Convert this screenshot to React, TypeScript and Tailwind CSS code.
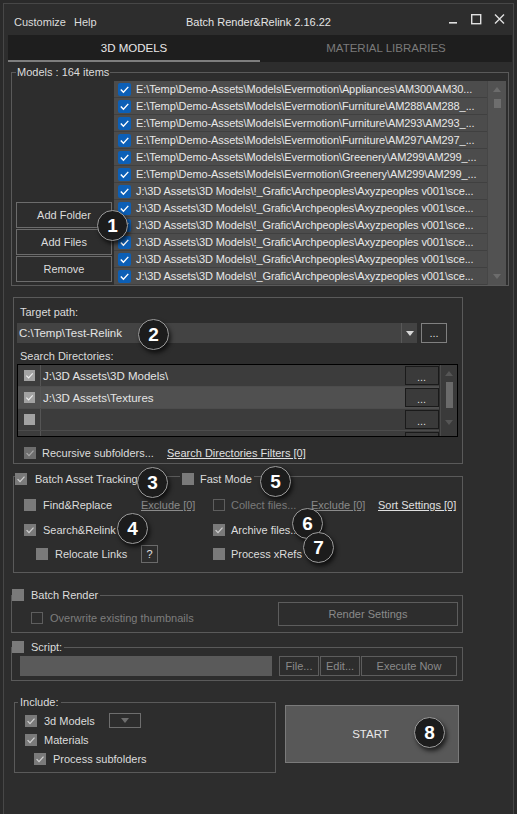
import React from 'react'

type BoxKind = 'gray' | 'outline' | 'light' | 'dim' | 'blue'

const BOX_CLS: Record<BoxKind, string> = {
  gray: 'w-[12px] h-[12px] bg-[#7a7a7a]',
  dim: 'w-[12px] h-[12px] bg-[#6e6e6e]',
  outline: 'w-[12px] h-[12px] border border-[#5e5e5e]',
  light: 'w-[11px] h-[11px] bg-[#a2a2a2]',
  blue: 'w-[13px] h-[13px] rounded-[2px] bg-[#0c5fb6]',
}

const CHECK_COLOR: Record<BoxKind, string> = {
  gray: '#cfcfcf',
  dim: '#a8a8a8',
  outline: '#777',
  light: '#eeeeee',
  blue: '#ffffff',
}

function Box({ kind, checked }: { kind: BoxKind; checked?: boolean }) {
  return (
    <span className={`flex-none block ${BOX_CLS[kind]}`}>
      {checked && (
        <svg viewBox="0 0 12 12" className="w-full h-full block">
          <path d="M2.6 6.1 L5 8.6 L9.5 3.6" fill="none" stroke={CHECK_COLOR[kind]} strokeWidth="1.3" />
        </svg>
      )}
    </span>
  )
}

function Badge({ n, className }: { n: number; className: string }) {
  return (
    <div
      className={`absolute w-[31px] h-[31px] rounded-full bg-[#1c1c1c] border-[1.5px] border-[#9c9c9c] shadow-[2px_3px_4px_rgba(0,0,0,0.65)] flex items-center justify-center text-white font-bold text-[19px] leading-none ${className}`}
    >
      {n}
    </div>
  )
}

function Tri({ color, className = '' }: { color: string; className?: string }) {
  return (
    <svg viewBox="0 0 8 5" className={`w-[8px] h-[5px] block ${className}`}>
      <path d="M0 0 H8 L4 5 Z" fill={color} />
    </svg>
  )
}

const MODELS = [
  'E:\\Temp\\Demo-Assets\\Models\\Evermotion\\Appliances\\AM300\\AM30...',
  'E:\\Temp\\Demo-Assets\\Models\\Evermotion\\Furniture\\AM288\\AM288_...',
  'E:\\Temp\\Demo-Assets\\Models\\Evermotion\\Furniture\\AM293\\AM293_...',
  'E:\\Temp\\Demo-Assets\\Models\\Evermotion\\Furniture\\AM297\\AM297_...',
  'E:\\Temp\\Demo-Assets\\Models\\Evermotion\\Greenery\\AM299\\AM299_...',
  'E:\\Temp\\Demo-Assets\\Models\\Evermotion\\Greenery\\AM299\\AM299_...',
  ...Array(6).fill('J:\\3D Assets\\3D Models\\!_Grafic\\Archpeoples\\Axyzpeoples v001\\sce...'),
]

const DIRS = [
  { path: 'J:\\3D Assets\\3D Models\\', checked: true, bg: 'bg-[#3c3c3c]', partial: false },
  { path: 'J:\\3D Assets\\Textures', checked: true, bg: 'bg-[#505050]', partial: false },
  { path: '', checked: false, bg: 'bg-[#3c3c3c]', partial: false },
  { path: '', checked: false, bg: 'bg-[#3c3c3c]', partial: true },
]

export default function App() {
  return (
    <div className="relative w-[517px] h-[814px] overflow-hidden bg-[#2a2a2a] font-['Liberation_Sans',Arial,sans-serif] text-[11px] leading-[14px] text-[#dcdcdc]">
      <div className="ml-[3px] mt-[3px] w-[511px] h-[811px] border-l border-t border-r border-[#474747] bg-[#2d2d2d] flex flex-col">
        {/* title bar */}
        <div className="h-[31px] grid grid-cols-[1fr_auto_1fr] items-start pt-[11px]">
          <div className="pl-[10px] flex gap-[8px]">
            <span>Customize</span>
            <span>Help</span>
          </div>
          <div className="text-[#e4e4e4]">Batch Render&amp;Relink 2.16.22</div>
          <div className="flex justify-end pr-[7px] -mt-[2px]">
            <svg viewBox="0 0 58 12" className="w-[58px] h-[12px] block">
              <rect x="1" y="9" width="8" height="1.6" fill="#e0e0e0" />
              <rect x="23.7" y="1.7" width="9" height="9" fill="none" stroke="#e0e0e0" strokeWidth="1.4" />
              <path d="M47 1.5 L56 10.5 M56 1.5 L47 10.5" stroke="#e0e0e0" strokeWidth="1.4" />
            </svg>
          </div>
        </div>

        {/* tabs */}
        <div className="ml-[4px] w-[504px] h-[27px] bg-[#1e1e1e] flex text-[11.5px]">
          <div className="flex-1 flex items-center justify-center border-b-2 border-[#7e7e7e] text-[#e8e8e8]">3D MODELS</div>
          <div className="flex-1 flex items-center justify-center border-b-2 border-transparent text-[#7a7a7a]">MATERIAL LIBRARIES</div>
        </div>

        {/* models */}
        <fieldset className="ml-[7px] mt-[3px] w-[498px] border border-[#5a5a5a]">
          <legend className="ml-[4px] px-[1px] leading-[14px]">Models : 164 items</legend>
          <div className="flex pl-[4px] mt-[2px]">
            <div className="w-[96px] flex flex-col justify-end gap-[1px] pb-[3px]">
              {['Add Folder', 'Add Files', 'Remove'].map(b => (
                <div key={b} className="h-[26px] border border-[#6c6c6c] flex items-center justify-center">{b}</div>
              ))}
            </div>
            <div className="ml-[2px] w-[392px] h-[204px] flex bg-[#4c4c4c]">
              <div className="flex-1 min-w-0">
                {MODELS.map((m, i) => (
                  <div key={i} className="h-[17px] flex items-center pl-[4px] gap-[5px] border-b border-[#404040] text-[11px] tracking-[-0.1px] text-[#e8e8e8] whitespace-nowrap overflow-hidden">
                    <Box kind="blue" checked />
                    <span>{m}</span>
                  </div>
                ))}
              </div>
              <div className="w-[19px] bg-[#525252] border-l border-[#464646] flex flex-col items-center pt-[6px] pb-[6px]">
                <Tri color="#6c6c6c" className="rotate-180" />
                <div className="mt-[7px] w-[7px] h-[9px] bg-[#6e6e6e]" />
                <div className="flex-1" />
                <Tri color="#6c6c6c" />
              </div>
            </div>
          </div>
        </fieldset>

        {/* target path */}
        <div className="ml-[9px] mt-[11px] w-[450px] h-[167px] border border-[#5a5a5a] pt-[7px] pl-[3px]">
          <div className="ml-[3px]">Target path:</div>
          <div className="flex mt-[4px]">
            <div className="w-[400px] h-[20px] bg-[#434343] flex">
              <div className="flex-1 flex items-center pl-[2px] text-[11.5px] text-[#e4e4e4]">C:\Temp\Test-Relink</div>
              <div className="w-[16px] border-l border-[#585858] flex items-center justify-center">
                <Tri color="#d8d8d8" />
              </div>
            </div>
            <div className="ml-[4px] w-[26px] h-[20px] border border-[#808080] flex items-center justify-center text-[#dddddd]">...</div>
          </div>
          <div className="ml-[3px] mt-[6px]">Search Directories:</div>
          <div className="mt-[1px] w-[441px] h-[73px] border border-black flex overflow-hidden">
            <div className="flex-1 min-w-0">
              {DIRS.map((d, i) => (
                <div key={i} className={`h-[22px] flex border-b border-[#4c4c4c] ${d.bg}`}>
                  <div className="w-[23px] border-r border-[#555] flex items-center justify-center">
                    {!d.partial && <Box kind="light" checked={d.checked} />}
                  </div>
                  <div className="flex-1 flex items-center pl-[2px] text-[11.5px] text-[#e4e4e4]">{d.path}</div>
                  <div className="w-[35px] flex items-center justify-center">
                    <div className="w-[34px] h-[19px] border border-[#1a1a1a] bg-[#3a3a3a] flex items-end justify-center pb-[2px] text-[#dddddd] leading-[10px]">
                      {d.partial ? '' : '...'}
                    </div>
                  </div>
                </div>
              ))}
            </div>
            <div className="w-[17px] ml-[1px] bg-[#3a3a3a] border-l border-[#4a4a4a] flex flex-col items-center pt-[6px]">
              <Tri color="#555" className="rotate-180" />
              <div className="mt-[6px] w-[7px] h-[26px] bg-[#6a6a6a]" />
              <div className="mt-[12px]"><Tri color="#555" /></div>
            </div>
          </div>
          <div className="flex items-center h-[16px] mt-[8px] ml-[7px]">
            <Box kind="dim" checked />
            <span className="ml-[6px] w-[125px]">Recursive subfolders...</span>
            <span className="underline text-[#e0e0e0]">Search Directories Filters [0]</span>
          </div>
        </div>

        {/* batch asset tracking */}
        <fieldset className="ml-[9px] mt-[2px] w-[450px] border border-[#5a5a5a]">
          <legend className="ml-[1px] pt-[6px] flex items-center pr-[2px]">
            <Box kind="gray" checked />
            <span className="ml-[8px] w-[103px] whitespace-nowrap">Batch Asset Tracking</span>
            <span className="self-start mt-[4px] mx-[2px] w-[40px] h-px bg-[#5a5a5a]" />
            <Box kind="gray" />
            <span className="ml-[6px]">Fast Mode</span>
          </legend>
          <div className="pt-[7px] pb-[6px] pl-[10px]">
            <div className="h-[24px] flex items-center">
              <div className="w-[117px] flex items-center">
                <Box kind="gray" />
                <span className="ml-[7px]">Find&amp;Replace</span>
              </div>
              <span className="w-[72px] underline text-[#8a8a8a]">Exclude [0]</span>
              <div className="w-[98px] flex items-center">
                <Box kind="outline" />
                <span className="ml-[6px] text-[#7a7a7a]">Collect files...</span>
              </div>
              <span className="w-[67px] underline text-[#8a8a8a]">Exclude [0]</span>
              <span className="underline text-[#e0e0e0]">Sort Settings [0]</span>
            </div>
            <div className="h-[25px] flex items-center">
              <div className="w-[189px] flex items-center">
                <Box kind="gray" checked />
                <span className="ml-[7px]">Search&amp;Relink</span>
              </div>
              <Box kind="gray" checked />
              <span className="ml-[6px]">Archive files...</span>
            </div>
            <div className="h-[24px] flex items-center">
              <div className="w-[117px] flex items-center pl-[12px]">
                <Box kind="gray" />
                <span className="ml-[7px]">Relocate Links</span>
              </div>
              <div className="w-[72px]">
                <div className="w-[17px] h-[18px] border border-[#6a6a6a] flex items-center justify-center text-[#e0e0e0]">?</div>
              </div>
              <Box kind="gray" />
              <span className="ml-[6px]">Process xRefs</span>
            </div>
          </div>
        </fieldset>

        {/* batch render */}
        <fieldset className="ml-[7px] mt-[15px] w-[452px] border border-[#5a5a5a]">
          <legend className="flex items-center h-[14px] pr-[2px]">
            <Box kind="gray" />
            <span className="ml-[7px]">Batch Render</span>
          </legend>
          <div className="flex items-end pl-[19px] pb-[6px]">
            <div className="w-[247px] h-[14px] mb-[1px] flex items-center">
              <Box kind="outline" />
              <span className="ml-[7px] text-[#7d7d7d]">Overwrite existing thumbnails</span>
            </div>
            <div className="w-[180px] h-[24px] border border-[#5d5d5d] flex items-center justify-center text-[#8a8a8a]">Render Settings</div>
          </div>
        </fieldset>

        {/* script */}
        <fieldset className="ml-[7px] mt-[7px] w-[452px] border border-[#5a5a5a]">
          <legend className="flex items-center h-[14px] pr-[2px]">
            <Box kind="gray" />
            <span className="ml-[7px]">Script:</span>
          </legend>
          <div className="flex mt-[2px] pl-[8px] pb-[4px] text-[#8a8a8a]">
            <div className="w-[252px] h-[20px] bg-[#5a5a5a]" />
            <div className="ml-[7px] w-[40px] h-[20px] border border-[#5d5d5d] flex items-center justify-center">File...</div>
            <div className="ml-[1px] w-[40px] h-[20px] border border-[#5d5d5d] flex items-center justify-center">Edit...</div>
            <div className="ml-[1px] w-[96px] h-[20px] border border-[#5d5d5d] flex items-center justify-center">Execute Now</div>
          </div>
        </fieldset>

        {/* include + start */}
        <div className="flex items-start mt-[14px]">
          <fieldset className="ml-[10px] w-[262px] border border-[#5a5a5a]">
            <legend className="ml-[3px] px-[2px] leading-[14px]">Include:</legend>
            <div className="pt-[2px] pb-[4px] pl-[10px]">
              <div className="h-[19px] flex items-center">
                <div className="w-[84px] flex items-center">
                  <Box kind="gray" checked />
                  <span className="ml-[7px]">3d Models</span>
                </div>
                <div className="w-[32px] h-[15px] border border-[#6e6e6e] flex items-center justify-center">
                  <Tri color="#6e6e6e" />
                </div>
              </div>
              <div className="h-[19px] flex items-center">
                <Box kind="gray" checked />
                <span className="ml-[7px]">Materials</span>
              </div>
              <div className="h-[19px] flex items-center pl-[9px]">
                <Box kind="gray" checked />
                <span className="ml-[7px]">Process subfolders</span>
              </div>
            </div>
          </fieldset>
          <div className="ml-[9px] mt-[10px] w-[174px] h-[58px] bg-[#585858] border border-[#7a7a7a] flex items-center justify-center pr-[3px] text-[11.5px] text-[#e8e8e8]">
            START
          </div>
        </div>
      </div>

      <Badge n={1} className="left-[97px] top-[210px]" />
      <Badge n={2} className="left-[138px] top-[319px]" />
      <Badge n={3} className="left-[137px] top-[467px]" />
      <Badge n={4} className="left-[117px] top-[513px]" />
      <Badge n={5} className="left-[260px] top-[466px]" />
      <Badge n={6} className="left-[292px] top-[508px]" />
      <Badge n={7} className="left-[303px] top-[532px]" />
      <Badge n={8} className="left-[414px] top-[717px]" />
    </div>
  )
}
